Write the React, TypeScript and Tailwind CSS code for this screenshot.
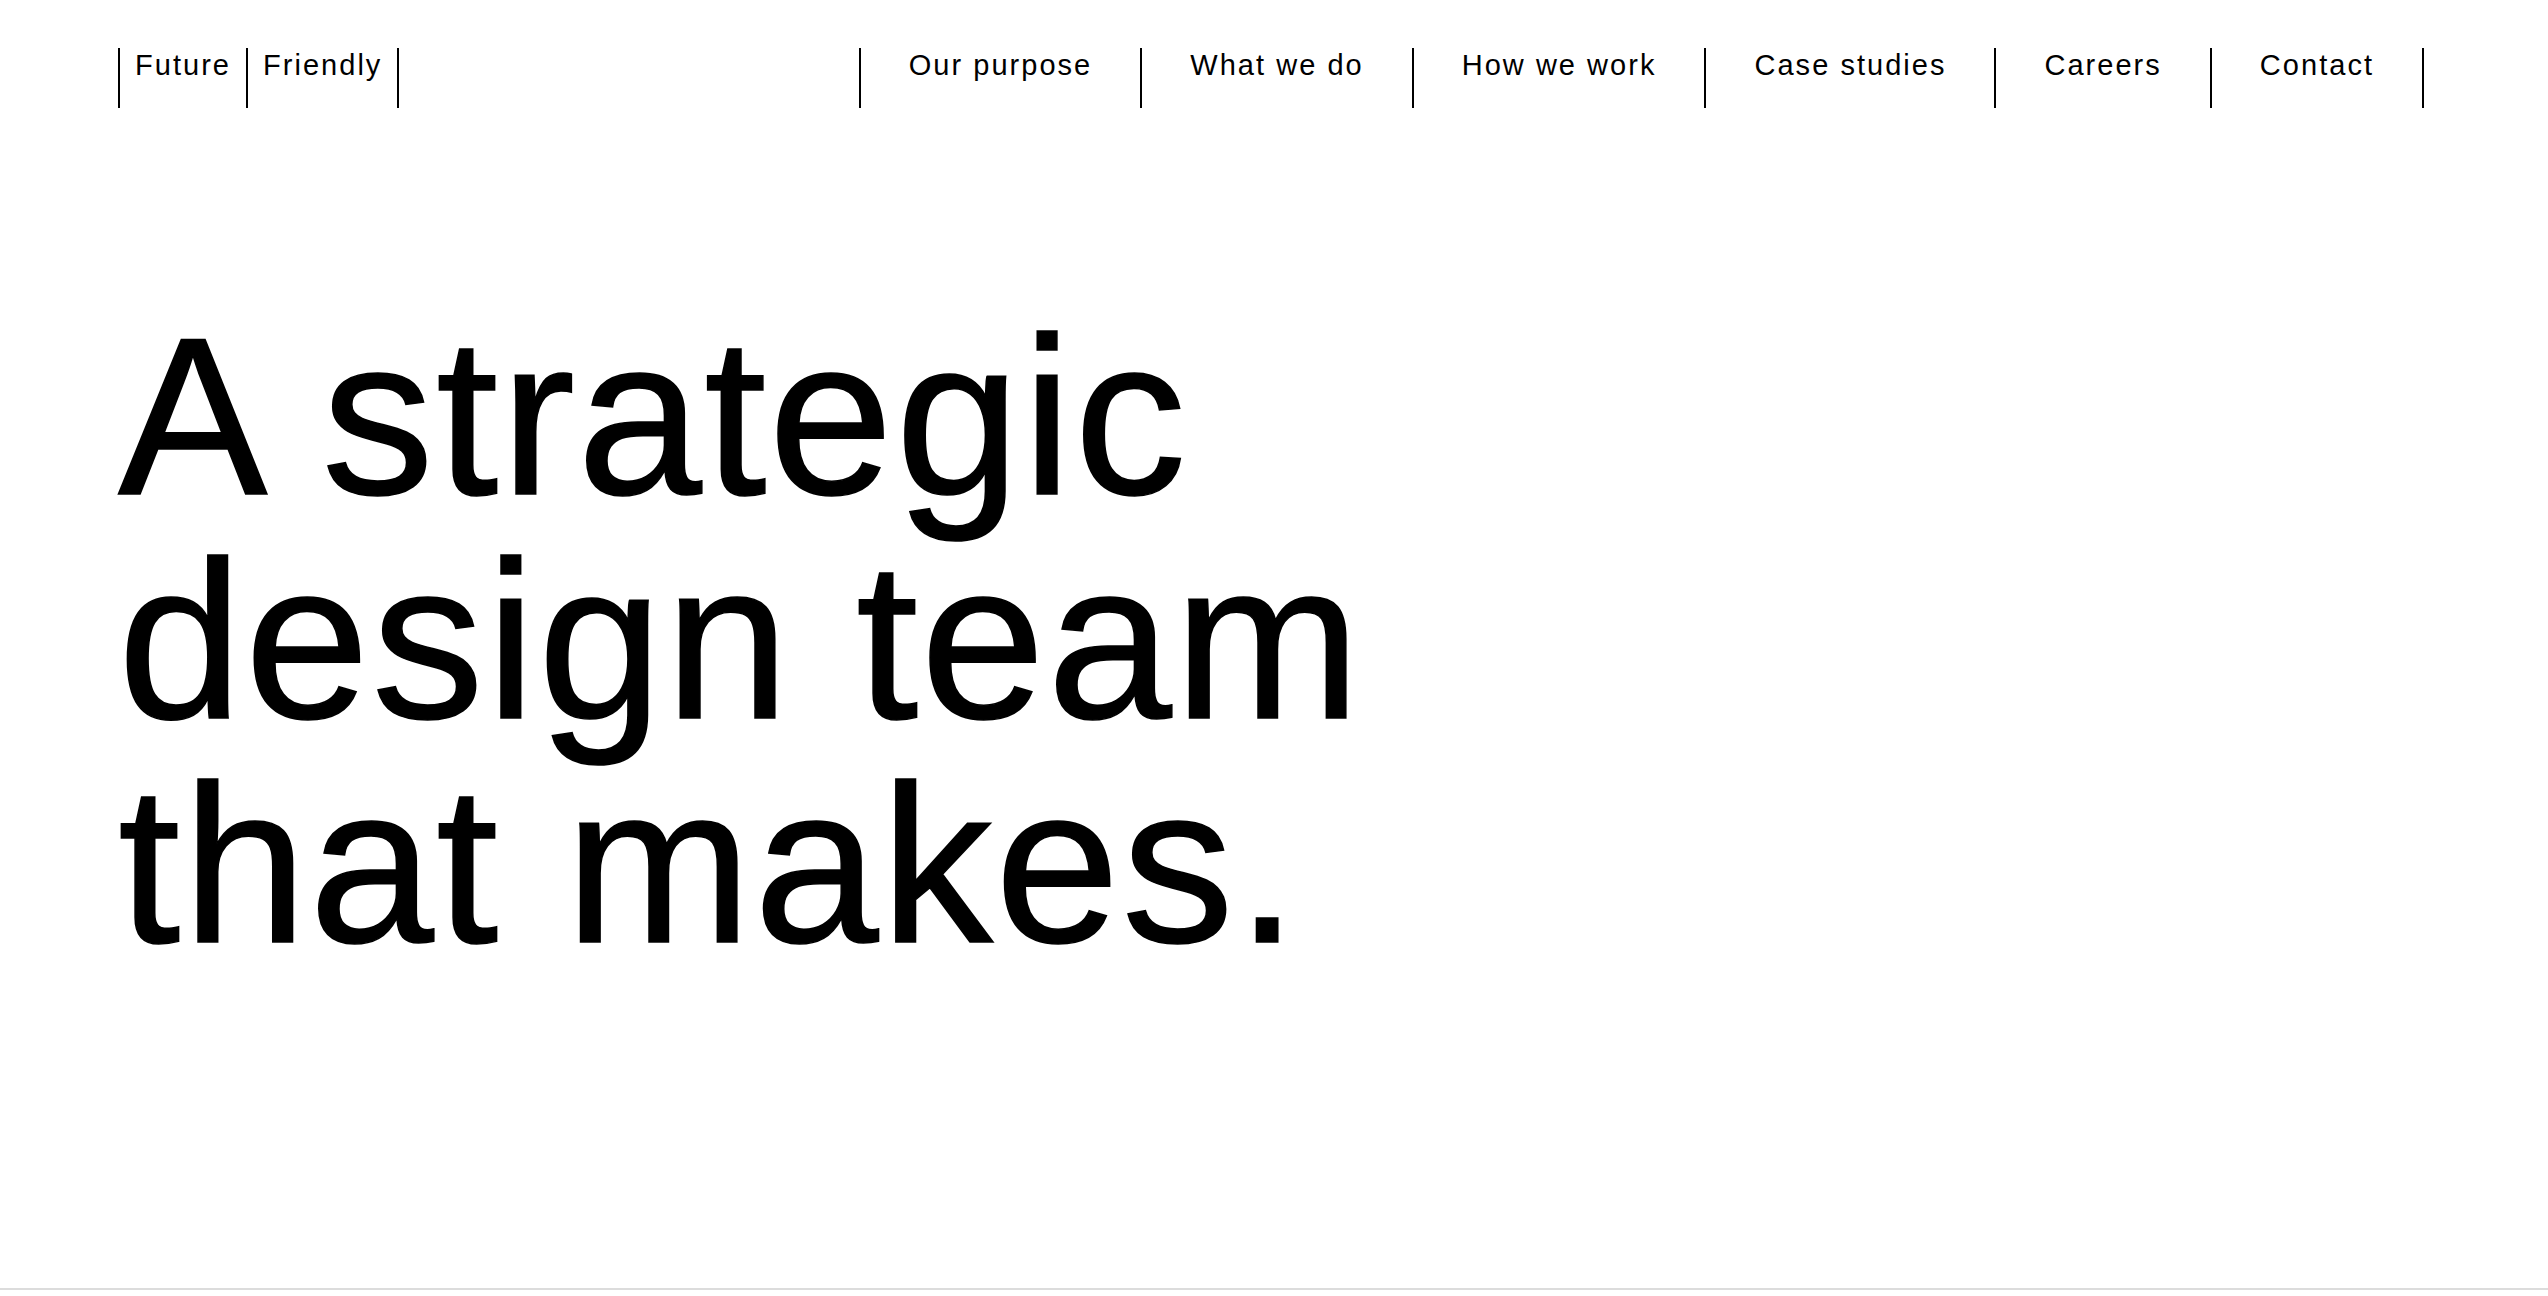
import React from "react";

const navItems = ["Our purpose", "What we do", "How we work", "Case studies", "Careers", "Contact"];

export default function App() {
  return (
    <div className="min-h-screen w-full bg-white text-black" style={{ fontFamily: '"Liberation Sans", Arial, sans-serif' }}>
      <div className="h-[1290px] border-b-2 border-[#dcdcdc] pl-[118px] pr-[124px] pt-[48px]">
        <header className="flex items-start justify-between">
          <div className="flex border-r-2 border-black">
            <a className="h-[60px] border-l-2 border-black px-[15px] text-[29px] leading-[34px] tracking-[0.07em]">Future</a>
            <a className="h-[60px] border-l-2 border-black px-[15px] text-[29px] leading-[34px] tracking-[0.07em]">Friendly</a>
          </div>
          <nav className="flex border-r-2 border-black">
            {navItems.map((item) => (
              <a
                key={item}
                className="h-[60px] border-l-2 border-black px-[48px] text-[29px] leading-[34px] tracking-[0.07em]"
              >
                {item}
              </a>
            ))}
          </nav>
        </header>
        <h1 className="mt-[196px] text-[224px] font-normal leading-[224px] tracking-[0.01em] [-webkit-text-stroke:1.5px_black]">
          A strategic
          <br />
          design team
          <br />
          that makes.
        </h1>
      </div>
    </div>
  );
}
